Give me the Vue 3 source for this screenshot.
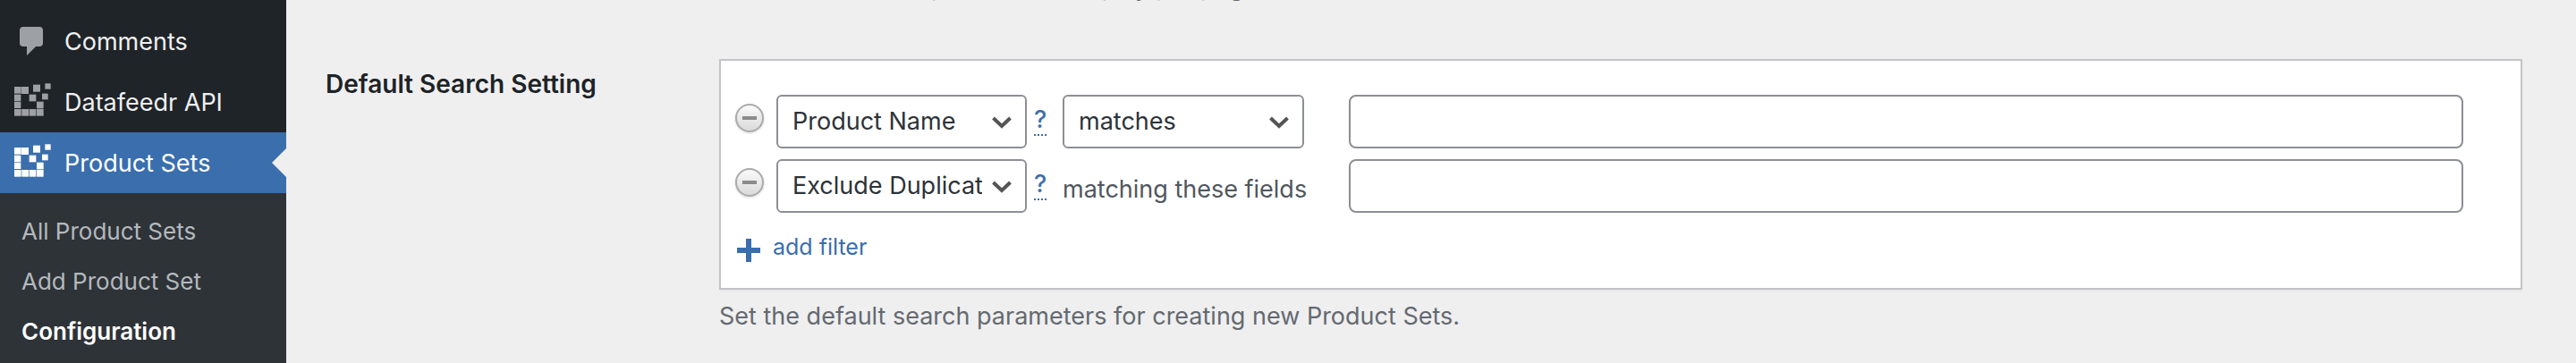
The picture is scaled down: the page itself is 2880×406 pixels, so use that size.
<script setup>
import { ref } from 'vue'

const menu = [
  { label: 'Comments', icon: 'comment', active: false },
  { label: 'Datafeedr API', icon: 'squares', active: false },
  { label: 'Product Sets', icon: 'squares', active: true },
]
const submenu = [
  { label: 'All Product Sets', current: false },
  { label: 'Add Product Set', current: false },
  { label: 'Configuration', current: true },
]
const squares = [
  [0, 12, 23], [24, 12, 24], [0, 38, 22], [0, 62, 22], [75, 62, 23],
  [0, 87, 23], [25, 87, 23], [50, 87, 23], [75, 87, 23],
  [63, 5, 24], [50, 38, 23], [93, 35, 20], [103, 1, 19],
]
const filters = ref([
  { id: 1, field: 'Product Name', operator: 'matches', value: '' },
  { id: 2, field: 'Exclude Duplicates', operator: null, value: '' },
])
</script>

<template>
  <div class="page">
    <nav class="sidebar" aria-label="Main menu">
      <a v-for="item in menu" :key="item.label" href="#" class="menu-item" :class="{ active: item.active }">
        <span class="menu-icon">
          <svg v-if="item.icon === 'comment'" width="28" height="32" viewBox="0 0 28 32" aria-hidden="true">
            <path d="M4 0H22Q26 0 26 4V18Q26 22 22 22H18L8 32V22H4Q0 22 0 18V4Q0 0 4 0Z" />
          </svg>
          <svg v-else width="40" height="42" viewBox="0 0 120 126" overflow="visible" aria-hidden="true">
            <rect v-for="(s, i) in squares" :key="i" :x="s[0]" :y="s[1]" :width="s[2]" :height="s[2]" />
          </svg>
        </span>
        <span class="menu-label">{{ item.label }}</span>
      </a>
      <div class="submenu">
        <a v-for="item in submenu" :key="item.label" href="#" :class="{ current: item.current }">{{ item.label }}</a>
      </div>
    </nav>

    <main class="content">
      <p class="description previous">Set the number of products to display per page.</p>
      <section class="setting" aria-labelledby="setting-title">
        <h2 id="setting-title">Default Search Setting</h2>
        <div class="setting-body">
          <form class="panel" @submit.prevent>
            <div v-for="f in filters" :key="f.id" class="filter">
              <button type="button" class="remove" aria-label="Remove filter">
                <svg width="34" height="36" viewBox="0 0 34 36" aria-hidden="true">
                  <defs>
                    <linearGradient :id="`knob-${f.id}`" x1="0" y1="0" x2="0" y2="1">
                      <stop offset="0" stop-color="#fbfbfb" />
                      <stop offset="1" stop-color="#d9d9d9" />
                    </linearGradient>
                  </defs>
                  <circle cx="17" cy="18" r="16" fill="none" stroke="#eeeeee" stroke-width="2" />
                  <circle cx="17" cy="17" r="15" :fill="`url(#knob-${f.id})`" stroke="#ababab" stroke-width="2" />
                  <rect x="9" y="15" width="16" height="4" fill="#8b8b8b" />
                </svg>
              </button>
              <span class="select-wrap field">
                <select v-model="f.field" aria-label="Filter field">
                  <option>Product Name</option>
                  <option>Exclude Duplicates</option>
                </select>
                <svg class="chevron" width="22" height="14" viewBox="0 0 22 14" aria-hidden="true">
                  <path d="M1.5 2L11 11L20.5 2" />
                </svg>
              </span>
              <a href="#" class="help" aria-label="Help">?</a>
              <span class="operator">
                <span v-if="f.operator" class="select-wrap compare">
                  <select v-model="f.operator" aria-label="Comparison">
                    <option>matches</option>
                  </select>
                  <svg class="chevron" width="22" height="14" viewBox="0 0 22 14" aria-hidden="true">
                    <path d="M1.5 2L11 11L20.5 2" />
                  </svg>
                </span>
                <label v-else :for="`value-${f.id}`" class="note">matching these fields</label>
              </span>
              <input :id="`value-${f.id}`" v-model="f.value" type="text" :aria-label="f.operator ? 'Filter value' : null" />
            </div>
            <button type="button" class="add">
              <svg width="26" height="26" viewBox="0 0 26 26" aria-hidden="true">
                <path d="M10 0H16V10H26V16H16V26H10V16H0V10H10Z" />
              </svg>
              <span>add filter</span>
            </button>
          </form>
          <p class="description">Set the default search parameters for creating new Product Sets.</p>
        </div>
      </section>
    </main>
  </div>
</template>

<style>
body {
  background: #efefef;
}
</style>

<style scoped>
.page {
  display: flex;
  min-height: 100vh;
  overflow: hidden;
  background: #efefef;
  color: #2c3338;
  font-family: Inter, "Liberation Sans", sans-serif;
  font-size: 27px;
  line-height: 40px;
}
.page * {
  box-sizing: border-box;
}
a {
  text-decoration: none;
}
.sidebar {
  display: flex;
  flex: 0 0 320px;
  flex-direction: column;
  padding-top: 12px;
  background: #1f2428;
}
.menu-item {
  position: relative;
  display: flex;
  align-items: center;
  height: 68px;
  color: #f0f0f1;
}
.menu-icon {
  display: flex;
  justify-content: center;
  width: 72px;
  fill: #9da1a6;
}
.menu-label {
  padding-top: 2px;
}
.menu-item.active {
  background: #3b6eac;
  color: #fff;
}
.active .menu-icon {
  fill: #fff;
}
.menu-item.active::after {
  content: "";
  position: absolute;
  top: 18px;
  right: 0;
  border: 16px solid transparent;
  border-left-width: 0;
  border-right-color: #efefef;
}
.submenu {
  flex: 1;
  padding: 15px 0 0;
  background: #2e3337;
  font-size: 26px;
}
.submenu a {
  display: block;
  padding: 8px 24px;
  color: #b4b9be;
}
.submenu a.current {
  color: #fff;
  font-weight: 600;
}
.content {
  flex: 1;
  min-width: 0;
  padding: 0 60px 0 44px;
}
.description {
  margin: 0;
  padding-top: 10px;
  color: #646970;
}
.description.previous {
  margin: -44px 0 60px 440px;
}
.setting {
  display: flex;
}
h2 {
  flex: 0 0 440px;
  margin: 0;
  padding-top: 8px;
  color: #1d2327;
  font-size: 28px;
  font-weight: 600;
}
.setting-body {
  flex: 1;
  min-width: 0;
}
.panel {
  padding: 38px 64px 26px 14px;
  border: 2px solid #c3c4c7;
  background: #fff;
  box-shadow: 0 2px 2px rgba(0, 0, 0, 0.04);
}
.filter {
  display: flex;
  align-items: flex-start;
  margin-bottom: 12px;
}
button {
  padding: 0;
  border: 0;
  background: none;
  font: inherit;
  cursor: pointer;
}
.remove {
  display: flex;
  width: 48px;
  padding: 9px 0 0 1px;
}
.select-wrap {
  position: relative;
  display: block;
  flex: none;
}
.field {
  width: 280px;
}
.compare {
  width: 270px;
}
select,
input {
  height: 60px;
  margin: 0;
  border: 2px solid #8c8f94;
  background: #fff;
  color: #2c3338;
  font: inherit;
}
select {
  display: block;
  width: 100%;
  padding: 0 48px 0 16px;
  border-radius: 6px;
  appearance: none;
}
input {
  flex: 1;
  min-width: 0;
  padding: 0 16px;
  border-radius: 8px;
}
.chevron {
  position: absolute;
  top: 24px;
  right: 17px;
  fill: none;
  stroke: #555;
  stroke-width: 4;
  pointer-events: none;
}
.help {
  margin: 8px 18px 0 8px;
  padding-top: 4px;
  width: 14px;
  border-bottom: 2px dotted #3b6eac;
  color: #3b6eac;
  font-weight: 500;
  line-height: 32px;
  text-align: center;
}
.operator {
  flex: 0 0 320px;
}
.note {
  display: block;
  padding-top: 14px;
  color: #50575e;
}
.add {
  display: flex;
  align-items: center;
  gap: 14px;
  margin-left: 4px;
  padding-top: 6px;
  color: #3b6eac;
  font-size: 25px;
}
.add svg {
  margin-top: 8px;
  fill: #3b6eac;
}
</style>
